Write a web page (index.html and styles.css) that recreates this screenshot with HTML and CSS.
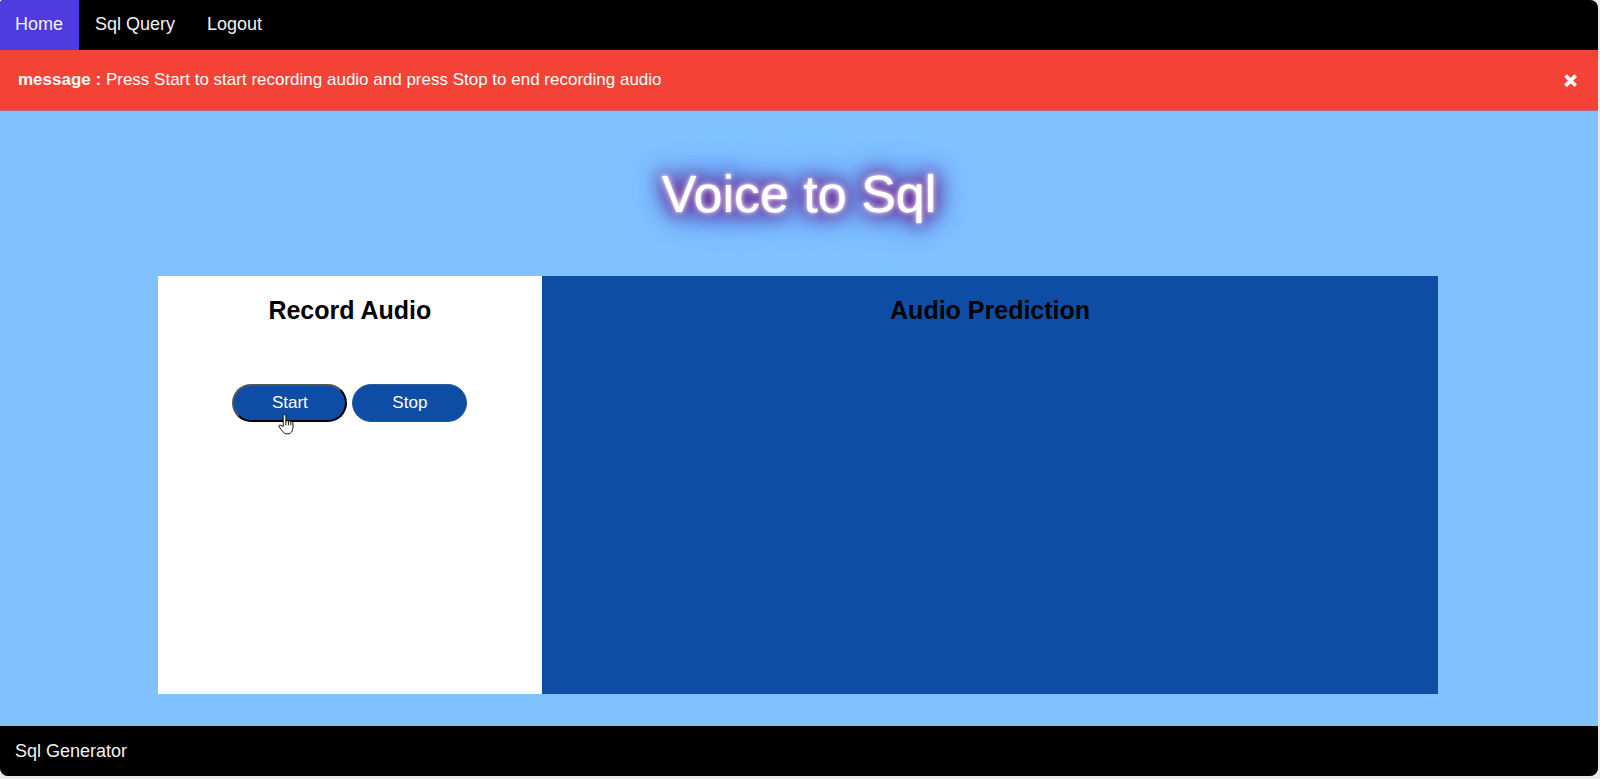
FILE: index.html
```html
<!DOCTYPE html>
<html lang="en">
<head>
<meta charset="utf-8">
<title>Voice to Sql</title>
<link rel="stylesheet" href="styles.css">
</head>
<body>
<div class="page">
  <nav class="navbar">
    <a class="navbar-link active" href="#home">Home</a>
    <a class="navbar-link" href="#query">Sql Query</a>
    <a class="navbar-link" href="#logout">Logout</a>
  </nav>
  <div class="alert" role="alert">
    <p class="alert-text"><strong>message :</strong> Press Start to start recording audio and press Stop to end recording audio</p>
    <button class="alert-close" type="button" aria-label="Close">&times;</button>
  </div>
  <main class="content">
    <h1 class="title">Voice to Sql</h1>
    <div class="panels">
      <section class="panel record">
        <h2 class="panel-title">Record Audio</h2>
        <div class="actions">
          <button class="action start" type="button">Start
            <svg class="pointer" viewBox="0 0 16 21" aria-hidden="true"><path d="M5.200 12.500V2.200c0-2 2.700-2 2.700 0v5.200c.2-1.100 2.300-1 2.500.2.400-.9 2.200-.7 2.400.5.600-.7 2.200-.4 2.200 1.100v4.300c0 1.600-.8 2.300-1 3.600-.7 1.700-1.900 2.800-4.400 2.800-2.700 0-3.900-.8-5-2.600L1.100 12.900c-.9-1.500.8-2.500 2-1.400z" fill="#fff" stroke="#111" stroke-linejoin="round"/><path d="M7.900 7.300v4M10.400 7.600v3.700M12.800 8.200v3.100" fill="none" stroke="#111"/></svg>
          </button>
          <button class="action stop" type="button">Stop</button>
        </div>
      </section>
      <section class="panel prediction">
        <h2 class="panel-title">Audio Prediction</h2>
      </section>
    </div>
  </main>
  <footer class="footer">Sql Generator</footer>
</div>
</body>
</html>
```
FILE: styles.css
```css
* { box-sizing: border-box; }
body {
  margin: 0;
  background: #e9e9e9;
  color: #000;
  font-family: Arial, "Liberation Sans", sans-serif;
  font-size: 17px;
}
.page {
  display: flex;
  flex-direction: column;
  min-height: calc(100vh - 3px);
  margin: 0 2px 3px 0;
  border-radius: 4px 8px 8px 8px;
  overflow: hidden;
  background: #80c1ff;
}
.navbar {
  display: flex;
  background: #000;
}
.navbar-link {
  padding: 14px 16px 16px;
  color: #f2f2f2;
  font-size: 18px;
  line-height: 20px;
  text-decoration: none;
}
.navbar-link.active {
  padding-left: 15px;
  background: #4f3be0;
}
.alert {
  display: flex;
  align-items: center;
  justify-content: space-between;
  padding: 20px 21px 20px 18px;
  border-bottom: 1px solid #b66a80;
  background: #f44336;
  color: #fff;
}
.alert-text {
  margin: 0;
  line-height: 20px;
}
.alert-close {
  padding: 2px 0 0;
  border: 0;
  background: none;
  color: #fff;
  font: bold 22px/18px Arial, "Liberation Sans", sans-serif;
  -webkit-text-stroke: 1px #fff;
  cursor: pointer;
}
.content {
  flex: 1;
  display: flex;
  flex-direction: column;
  padding: 0 10% 32px;
}
.title {
  margin: 53px 0 52px;
  color: #fff;
  font-size: 52px;
  font-weight: 400;
  line-height: 60px;
  text-align: center;
  text-shadow:
    0 0 2px #fff,
    0 0 6px #fff,
    0 0 16px #8a1078,
    0 0 20px #801090,
    0 0 24px #4030a0,
    0 0 28px #3040b0,
    0 0 48px #5a90e0;
}
.panels {
  flex: 1;
  display: flex;
  margin: 0 0 0 -2px;
  background: #0d4da5;
}
.panel {
  padding-top: 19px;
  text-align: center;
}
.record {
  flex: 3;
  background: #fff;
}
.prediction { flex: 7; }
.panel-title {
  margin: 0;
  font-size: 25px;
  line-height: 30px;
}
.actions {
  display: flex;
  justify-content: center;
  gap: 5px;
  margin-top: 59px;
}
.action {
  position: relative;
  width: 115px;
  height: 38px;
  padding: 0;
  border: 2px solid;
  border-radius: 20px;
  background: #0d4da5;
  color: #fff;
  font: 17px/20px Arial, "Liberation Sans", sans-serif;
  cursor: pointer;
}
.start { border-color: #555 #000 #000 #555; }
.stop { border: 1px solid #2c5894; }
.pointer {
  position: absolute;
  top: 28px;
  left: 44px;
  width: 16px;
  height: 21px;
}
.footer {
  padding: 15px;
  background: #000;
  color: #f2f2f2;
  font-size: 18px;
  line-height: 20px;
}
```
